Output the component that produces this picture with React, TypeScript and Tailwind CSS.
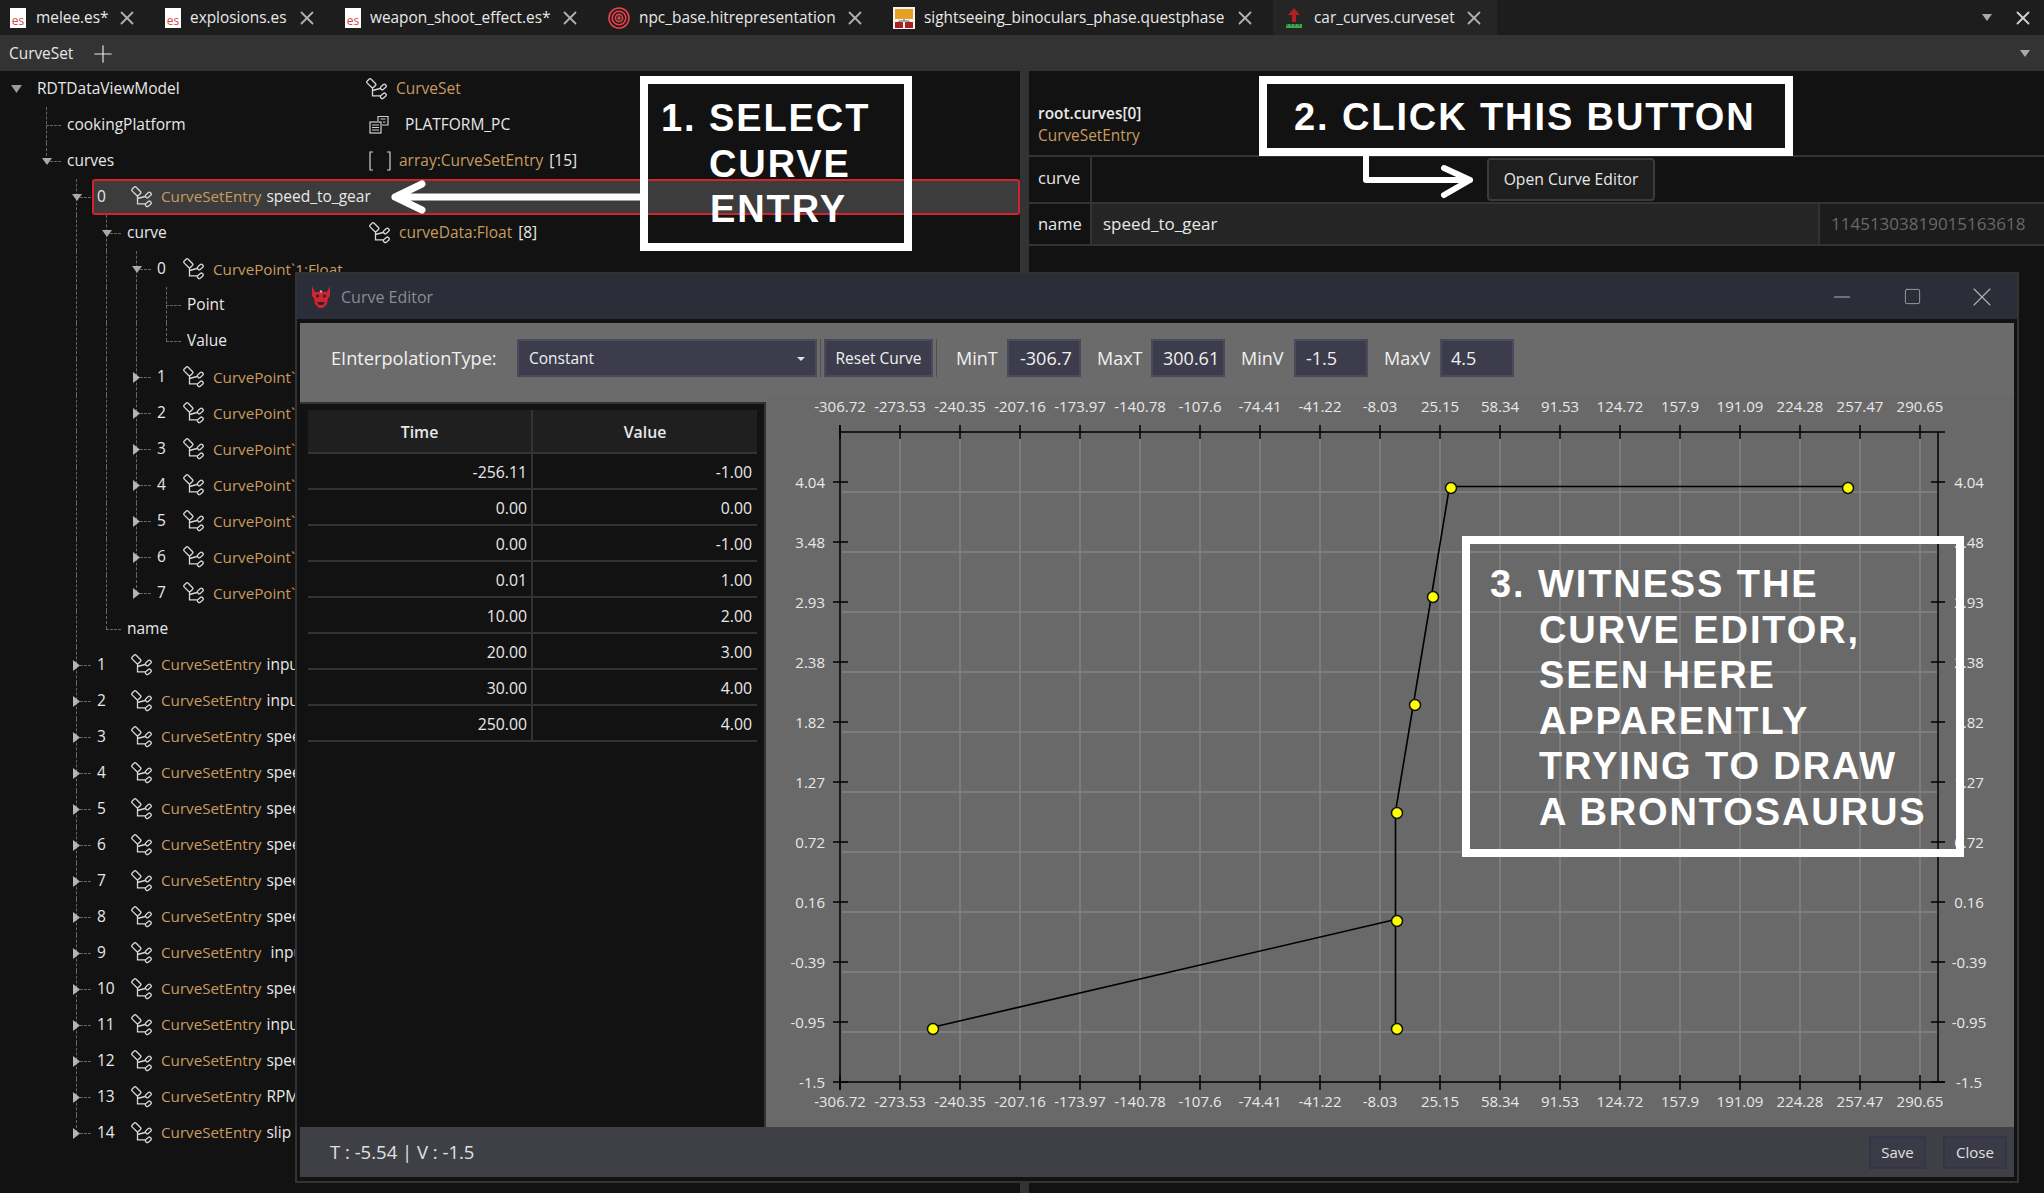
import React from 'react';
import { Minus, Plus, Square, X } from 'lucide-react';

// --- small drawn icons

function TreeIcon() {
    return (
        <svg width="21" height="22" viewBox="0 0 21 22" fill="none" stroke="#d8d8d8" strokeWidth="1.3" className="shrink-0">
            <rect x="0.800" y="2.500" width="9" height="5.500" rx="1.500" transform="rotate(45 5.300 5.300)" />
            <path d="M6.500 9.500V17.800H14M6.500 12.500L14 10.500" />
            <rect x="14.200" y="7.200" width="6.200" height="3.600" rx="1.500" transform="rotate(-40 17.300 9)" />
            <rect x="14.200" y="16" width="6.200" height="3.600" rx="1.500" transform="rotate(-40 17.300 17.800)" />
        </svg>
    );
}

function EnumIcon() {
    return (
        <svg width="20" height="20" viewBox="0 0 20 20" fill="none" stroke="#d0d0d0" strokeWidth="1.2" className="shrink-0">
            <path d="M9 6V1.500H19V10H13" />
            <path d="M11.500 4H16.500M14 7H16.500" />
            <rect x="1" y="7" width="11" height="11" />
            <path d="M3 10H10M3 12.500H10M3 15H10" />
        </svg>
    );
}

function BracketIcon() {
    return (
        <svg width="22" height="20" viewBox="0 0 22 20" fill="none" stroke="#d0d0d0" strokeWidth="1.2" className="shrink-0">
            <path d="M4 1H1V19H4M18 1H21V19H18" />
        </svg>
    );
}

function EsIcon() {
    return (
        <span className="flex h-[20px] w-[16px] items-end justify-center bg-white pb-[1px] text-[12px] leading-[12px] text-[#d8473f]">es</span>
    );
}

function TargetIcon() {
    return (
        <svg width="22" height="22" viewBox="0 0 22 22" fill="none" stroke="#e8414a" strokeWidth="1.6">
            <circle cx="11" cy="11" r="10" />
            <circle cx="11" cy="11" r="6.800" />
            <circle cx="11" cy="11" r="3.600" />
            <circle cx="11" cy="11" r="1" fill="#e8414a" />
        </svg>
    );
}

function PhaseIcon() {
    return (
        <svg width="22" height="22" viewBox="0 0 22 22">
            <rect width="22" height="22" fill="#f4f4f4" />
            <rect x="2" y="2" width="18" height="10" fill="#e8a020" />
            <rect x="2" y="15" width="8" height="6" fill="#a82020" />
            <rect x="12" y="15" width="8" height="6" fill="#a82020" />
            <path d="M11 12V14M6 15V14H16V15" stroke="#666" fill="none" />
        </svg>
    );
}

function CurvesetIcon() {
    return (
        <svg width="22" height="22" viewBox="0 0 22 22">
            <path d="M11 1L17 8H13V15H9V8H5Z" fill="#b02020" />
            <rect x="3" y="17" width="16" height="4" fill="#3aa84a" />
            <path d="M3 17H19" stroke="#1d1d1d" strokeDasharray="2 2" strokeWidth="4" opacity="0.35" />
        </svg>
    );
}

function DemonLogo() {
    return (
        <svg width="20" height="24" viewBox="0 0 20 24" className="shrink-0">
            <path d="M1 1L4 7H16L19 1L19 11L17 13L16 19L12 23H8L4 19L3 13L1 11Z" fill="#cf2431" />
            <circle cx="6.500" cy="11" r="1.600" fill="#33202a" />
            <circle cx="13.500" cy="11" r="1.600" fill="#33202a" />
            <circle cx="10" cy="6.500" r="1.300" fill="#d9a0a0" />
            <path d="M6 17H14L12 20H8Z" fill="#33202a" />
        </svg>
    );
}

function Triangle({ open, root }: { open: boolean; root?: boolean }) {
    if (root) {
        return (
            <svg width="11" height="8" viewBox="0 0 11 8"><path d="M0 0H11L5.500 8Z" fill="#9a9a9a" /></svg>
        );
    }
    return open ? (
        <svg width="10" height="7" viewBox="0 0 10 7"><path d="M0 0H10L5 7Z" fill="#aaaaaa" /></svg>
    ) : (
        <svg width="7" height="11" viewBox="0 0 7 11"><path d="M0 0L7 5.500L0 11Z" fill="#b5b5b5" /></svg>
    );
}

// --- tree data

type TreeNode = {
    name?: string;
    index?: string;
    icon?: boolean;
    type?: string;
    value?: string;
    right?: 'set' | 'enum' | 'array' | 'data';
    rightText?: string;
    rightSuffix?: string;
    selected?: boolean;
    children?: TreeNode[];
};

const closedPoint = (index: string): TreeNode => ({ index, icon: true, type: 'CurvePoint`1:Float', children: [] });
const closedEntry = (index: string, value: string): TreeNode => ({ index, icon: true, type: 'CurveSetEntry', value, children: [] });

const treeData: TreeNode[] = [
    {
        name: 'RDTDataViewModel',
        right: 'set',
        rightText: 'CurveSet',
        children: [
            { name: 'cookingPlatform', right: 'enum', rightSuffix: 'PLATFORM_PC' },
            {
                name: 'curves',
                right: 'array',
                rightText: 'array:CurveSetEntry',
                rightSuffix: '[15]',
                children: [
                    {
                        index: '0',
                        icon: true,
                        type: 'CurveSetEntry',
                        value: 'speed_to_gear',
                        selected: true,
                        children: [
                            {
                                name: 'curve',
                                right: 'data',
                                rightText: 'curveData:Float',
                                rightSuffix: '[8]',
                                children: [
                                    {
                                        index: '0',
                                        icon: true,
                                        type: 'CurvePoint`1:Float',
                                        children: [{ name: 'Point' }, { name: 'Value' }],
                                    },
                                    ...['1', '2', '3', '4', '5', '6', '7'].map(closedPoint),
                                ],
                            },
                            { name: 'name' },
                        ],
                    },
                    closedEntry('1', 'input'),
                    closedEntry('2', 'input'),
                    closedEntry('3', 'speed'),
                    closedEntry('4', 'speed'),
                    closedEntry('5', 'speed'),
                    closedEntry('6', 'speed'),
                    closedEntry('7', 'speed'),
                    closedEntry('8', 'speed'),
                    closedEntry('9', ' input'),
                    closedEntry('10', 'speed'),
                    closedEntry('11', 'input'),
                    closedEntry('12', 'speed'),
                    closedEntry('13', 'RPM'),
                    closedEntry('14', 'slip'),
                ],
            },
        ],
    },
];

type FlatRow = { node: TreeNode; depth: number; guides: number[]; last: boolean };

const guideX = (depth: number) => 16 + 30 * depth;

function flatten(nodes: TreeNode[], depth: number, guides: number[]): FlatRow[] {
    const rows: FlatRow[] = [];
    nodes.forEach((node, i) => {
        const last = i === nodes.length - 1;
        rows.push({ node, depth, guides, last });
        if (node.children && node.children.length > 0) {
            const nextGuides = depth > 0 && !last ? [...guides, guideX(depth)] : guides;
            rows.push(...flatten(node.children, depth + 1, nextGuides));
        }
    });
    return rows;
}

function TreeRow({ row }: { row: FlatRow }) {
    const { node, depth, guides, last } = row;
    const x = guideX(depth);
    const expandable = node.children !== undefined;
    const open = expandable && node.children!.length > 0;

    return (
        <div className="relative flex h-9 items-center whitespace-nowrap text-[15.500px]">
            {node.selected && (
                <div className="absolute inset-y-0 left-[92px] right-0 rounded-[3px] border-2 border-[#d3222f] bg-[#3c3c3c]"></div>
            )}
            {guides.map((g) => (
                <span key={g} className="absolute inset-y-0 border-l border-dashed border-[#666666]" style={{ left: g }}></span>
            ))}
            {depth > 0 && (
                <>
                    <span className={`absolute top-0 border-l border-dashed border-[#666666] ${last ? 'h-[18px]' : 'h-9'}`} style={{ left: x }}></span>
                    <span className="absolute top-[18px] w-[15px] border-t border-dashed border-[#666666]" style={{ left: x }}></span>
                </>
            )}
            {expandable && (
                <span className="absolute top-0 flex h-9 w-0 items-center justify-center" style={{ left: x + 0.5 }}>
                    <span className="flex shrink-0"><Triangle open={open} root={depth === 0} /></span>
                </span>
            )}

            <div className="relative flex w-[369px] shrink-0 items-center" style={{ paddingLeft: 37 + 30 * depth }}>
                {node.index !== undefined && (
                    <>
                        <span className={`shrink-0 text-[#e8e8e8] ${depth === 2 ? 'w-[34px]' : 'w-[26px]'}`}>{node.index}</span>
                        <TreeIcon />
                        <span className="ml-[9px] flex shrink-0 items-baseline">
                            <span className="text-[15.200px] text-[#c89b5f]">{node.type}</span>
                            {node.value && <span className="ml-[5px] whitespace-pre text-[#e8e8e8]">{node.value}</span>}
                        </span>
                    </>
                )}
                {node.name && <span className="text-[#e8e8e8]">{node.name}</span>}
            </div>

            {node.right && (
                <div className={`relative flex items-center ${node.right === 'set' ? '-ml-[3px]' : ''}`}>
                    {(node.right === 'set' || node.right === 'data') && <TreeIcon />}
                    {node.right === 'enum' && <EnumIcon />}
                    {node.right === 'array' && <BracketIcon />}
                    {node.rightText && <span className={`text-[#c89b5f] ${node.right === 'array' ? 'ml-2' : 'ml-[9px]'}`}>{node.rightText}</span>}
                    {node.rightSuffix && <span className={`text-[#e8e8e8] ${node.right === 'enum' ? 'ml-4' : 'ml-[6px]'}`}>{node.rightSuffix}</span>}
                </div>
            )}
        </div>
    );
}

// --- tabs

const tabs = [
    { label: 'melee.es*', icon: <EsIcon />, width: 'w-[155px]', slot: 'w-[26px]' },
    { label: 'explosions.es', icon: <EsIcon />, width: 'w-[180px]', slot: 'w-[25px]' },
    { label: 'weapon_shoot_effect.es*', icon: <EsIcon />, width: 'w-[263px]', slot: 'w-[25px]' },
    { label: 'npc_base.hitrepresentation', icon: <TargetIcon />, width: 'w-[285px]', slot: 'w-[31px]' },
    { label: 'sightseeing_binoculars_phase.questphase', icon: <PhaseIcon />, width: 'w-[390px]', slot: 'w-[31px]' },
    { label: 'car_curves.curveset', icon: <CurvesetIcon />, width: 'w-[224px]', slot: 'w-[31px]', active: true },
];

function TabBar() {
    return (
        <div className="flex h-[35px] shrink-0 items-center bg-[#1d1d1d]">
            {tabs.map((tab) => (
                <div key={tab.label} className={`flex h-full shrink-0 items-center pl-[10px] ${tab.width} ${tab.active ? 'bg-[#252525]' : ''}`}>
                    <span className={`flex shrink-0 ${tab.slot}`}>{tab.icon}</span>
                    <span className="whitespace-nowrap text-[15.400px] text-[#e8e8e8]">{tab.label}</span>
                    <X size={22} strokeWidth={2} className={`ml-auto text-[#b0b0b0] ${tab.active ? 'mr-[12px]' : 'mr-[17px]'}`} />
                </div>
            ))}
            <div className="ml-auto flex items-center gap-[20px] pr-[10px]">
                <Triangle open />
                <X size={22} strokeWidth={2} className="text-[#d0d0d0]" />
            </div>
        </div>
    );
}

// --- curve editor

const tableRows = [
    ['-256.11', '-1.00'],
    ['0.00', '0.00'],
    ['0.00', '-1.00'],
    ['0.01', '1.00'],
    ['10.00', '2.00'],
    ['20.00', '3.00'],
    ['30.00', '4.00'],
    ['250.00', '4.00'],
];

const xLabels = ['-306.72', '-273.53', '-240.35', '-207.16', '-173.97', '-140.78', '-107.6', '-74.41', '-41.22', '-8.03', '25.15', '58.34', '91.53', '124.72', '157.9', '191.09', '224.28', '257.47', '290.65'];
const yLabels = ['4.04', '3.48', '2.93', '2.38', '1.82', '1.27', '0.72', '0.16', '-0.39', '-0.95', '-1.5'];
const curvePoints: [number, number][] = [[933, 1029], [1397, 921], [1397, 1029], [1397, 813], [1415, 705], [1433, 597], [1451, 488], [1848, 488]];

function CurveChart() {
    const left = 840;
    const right = 1938;
    const top = 432;
    const bottom = 1082;
    const polyline = curvePoints.map(([x, y]) => `${x - 1.5},${y - 1.5}`).join(' ');

    return (
        <svg width="1248" height="731" viewBox="766 396 1248 731" className="block">
            {xLabels.slice(1).map((_, i) => (
                <line key={i} x1={left + 60 * (i + 1)} x2={left + 60 * (i + 1)} y1={top} y2={bottom} stroke="#7d7d7d" strokeWidth="2" />
            ))}
            {yLabels.slice(0, 10).map((_, i) => (
                <line key={i} x1={left + 2} x2={right} y1={492 + 60 * i} y2={492 + 60 * i} stroke="#7d7d7d" strokeWidth="2" />
            ))}

            <g stroke="#000000" strokeWidth="1.5">
                <line x1={left} x2={1945} y1={top} y2={top} />
                <line x1={left} x2={1945} y1={bottom} y2={bottom} />
                <line x1={left} x2={left} y1={425} y2={1090} />
                <line x1={right} x2={right} y1={top} y2={bottom} />
                {xLabels.map((_, i) => (
                    <g key={i}>
                        <line x1={left + 60 * i} x2={left + 60 * i} y1={425} y2={439} />
                        <line x1={left + 60 * i} x2={left + 60 * i} y1={1075} y2={1090} />
                    </g>
                ))}
                {yLabels.map((_, i) => (
                    <g key={i}>
                        <line x1={833} x2={848} y1={482 + 60 * i} y2={482 + 60 * i} />
                        <line x1={1931} x2={1945} y1={482 + 60 * i} y2={482 + 60 * i} />
                    </g>
                ))}
            </g>

            <g className="fill-[#e8e8e8] text-[15px]">
                {xLabels.map((label, i) => (
                    <g key={label}>
                        <text x={left + 60 * i} y={412} textAnchor="middle">{label}</text>
                        <text x={left + 60 * i} y={1107} textAnchor="middle">{label}</text>
                    </g>
                ))}
                {yLabels.map((label, i) => (
                    <g key={label}>
                        <text x={825} y={488 + 60 * i} textAnchor="end">{label}</text>
                        <text x={1969} y={488 + 60 * i} textAnchor="middle">{label}</text>
                    </g>
                ))}
            </g>

            <polyline points={polyline} fill="none" stroke="#000000" strokeWidth="1.6" />
            {curvePoints.map(([x, y], i) => (
                <circle key={i} cx={x} cy={y} r="5.500" fill="#ffff00" stroke="#111111" strokeWidth="1.500" />
            ))}
        </svg>
    );
}

const fields = [
    { label: 'MinT', value: '-306.7', width: 'w-[51px]', pad: 'pl-[11px]' },
    { label: 'MaxT', value: '300.61', width: 'w-[54px]', pad: 'pl-[10px]' },
    { label: 'MinV', value: '-1.5', width: 'w-[53px]', pad: 'pl-[10px]' },
    { label: 'MaxV', value: '4.5', width: 'w-[56px]', pad: 'pl-[9px]' },
];

function CurveEditor() {
    return (
        <div className="absolute left-[295px] top-[272px] flex h-[911px] w-[1724px] flex-col border-2 border-[#333333] bg-[#121212]">
            <div className="flex h-[45px] shrink-0 items-center bg-[#2b2d38] pl-[14px]">
                <DemonLogo />
                <span className="ml-[10px] text-[16px] text-[#8b8b90]">Curve Editor</span>
                <div className="ml-auto flex items-center">
                    <span className="flex w-[70px] justify-center"><Minus size={26} strokeWidth={1} className="text-[#b5b5b5]" /></span>
                    <span className="flex w-[70px] justify-center"><Square size={19} strokeWidth={1} className="text-[#b5b5b5]" /></span>
                    <span className="flex w-[70px] justify-center"><X size={32} strokeWidth={0.8} className="text-[#b5b5b5]" /></span>
                </div>
            </div>

            <div className="mx-[3px] mb-[4px] mt-1 flex min-h-0 flex-1 flex-col bg-[#6b6b6b]">
                <div className="flex h-[73px] shrink-0 items-start pl-[31px] pt-[16px] text-[#f0f0f0]">
                    <span className="flex h-[38px] w-[186px] items-center pt-px text-[18.200px]">EInterpolationType:</span>
                    <div className="flex h-[38px] w-[300px] items-center justify-between border-2 border-[#4a4a5c] bg-[#3c3c4c] pl-[10px] pr-[10px] pt-px text-[15.500px]">
                        <span>Constant</span>
                        <svg width="8" height="4" viewBox="0 0 8 4"><path d="M0 0H8L4 4Z" fill="#e0e0e0" /></svg>
                    </div>
                    <span className="ml-[3px] h-[38px] w-px bg-[#505050]"></span>
                    <div className="ml-[3px] flex h-[38px] w-[109px] items-center justify-center border-2 border-[#4a4a5c] bg-[#3c3c4c] pt-px text-[15.500px]">Reset Curve</div>
                    <span className="ml-[3px] h-[38px] w-px bg-[#505050]"></span>
                    {fields.map((field, i) => (
                        <div key={field.label} className={`flex h-[38px] items-center ${i === 0 ? 'ml-[19px]' : 'ml-4'}`}>
                            <span className={`text-[18px] ${field.width}`}>{field.label}</span>
                            <span className={`flex h-[38px] w-[74px] items-center border-2 border-[#4a4a5c] bg-[#3c3c4c] text-[18px] ${field.pad}`}>{field.value}</span>
                        </div>
                    ))}
                </div>

                <div className="flex min-h-0 flex-1">
                    <div className="mt-[6px] w-[466px] shrink-0 border-r-2 border-t-2 border-[#333333] bg-[#121212] pl-[8px] pt-[6px] text-[15.800px] text-[#e8e8e8]">
                        <div className="w-[449px]">
                            <div className="grid h-[44px] grid-cols-[225px_224px] border-b-2 border-[#333333] bg-[#1f1f1f] font-semibold">
                                <div className="flex items-center justify-center border-r-2 border-[#333333] pt-[4px]">Time</div>
                                <div className="flex items-center justify-center pt-[4px]">Value</div>
                            </div>
                            {tableRows.map((row, i) => (
                                <div key={i} className="grid h-9 grid-cols-[225px_224px] border-b-2 border-[#333333]">
                                    <div className="flex items-center justify-end border-r-2 border-[#333333] pr-[4px] pt-[4px]">{row[0]}</div>
                                    <div className="flex items-center justify-end pr-[5px] pt-[4px]">{row[1]}</div>
                                </div>
                            ))}
                        </div>
                    </div>
                    <div className="min-w-0 flex-1 bg-[#696969]">
                        <CurveChart />
                    </div>
                </div>

                <div className="flex h-[50px] shrink-0 items-center bg-[#3f4046] pl-[30px] pr-[7px] text-[#e0e0e0]">
                    <span className="text-[18.500px]">T : -5.54 | V : -1.5</span>
                    <div className="ml-auto flex gap-[17px] text-[15px]">
                        <div className="flex h-[33px] w-[57px] items-center justify-center border-2 border-[#35354a] bg-[#3b3b47]">Save</div>
                        <div className="flex h-[33px] w-[64px] items-center justify-center border-2 border-[#35354a] bg-[#3b3b47]">Close</div>
                    </div>
                </div>
            </div>
        </div>
    );
}

// --- right hand details panel

function DetailsPanel() {
    return (
        <div className="flex min-w-0 flex-1 flex-col text-[#e8e8e8]">
            <div className="flex h-[86px] shrink-0 flex-col justify-end border-b-2 border-[#333333] pb-[8px] pl-[9px] text-[15.400px]">
                <span className="font-semibold leading-[22px]">root.curves[0]</span>
                <span className="leading-[22px] text-[#c89b5f]">CurveSetEntry</span>
            </div>
            <div className="flex h-[47px] shrink-0 border-b-2 border-[#333333]">
                <div className="flex w-[63px] items-center border-r-2 border-[#333333] pb-[2px] pl-[9px] text-[16.500px]">curve</div>
                <div className="flex flex-1 items-center pl-[395px]">
                    <div className="flex h-[43px] w-[168px] items-center justify-center rounded-[4px] border-2 border-[#3a3a42] bg-[#1e1e1e] text-[15.700px]">Open Curve Editor</div>
                </div>
            </div>
            <div className="flex h-[42px] shrink-0 border-b-2 border-[#333333] text-[17px]">
                <div className="flex w-[63px] items-center border-r-2 border-[#333333] pl-[9px] text-[16.500px]">name</div>
                <div className="flex flex-1 items-center bg-[#252525] pl-[11px]">speed_to_gear</div>
                <div className="flex w-[226px] items-center border-l-2 border-[#333333] bg-[#1c1c1c] pl-[11px] text-[#686868]">11451303819015163618</div>
            </div>
        </div>
    );
}

// --- annotations drawn over the screenshot

const noteText = "font-['Liberation_Sans',sans-serif] text-[38px] font-bold leading-[45.600px] tracking-[1.900px] text-white whitespace-nowrap";

function Annotations() {
    return (
        <>
            <div className={`absolute left-[640px] top-[76px] h-[175px] w-[272px] border-8 border-white pl-[13px] pt-[12px] ${noteText}`}>
                <p>1. SELECT</p>
                <p className="pl-[48px]">CURVE</p>
                <p className="pl-[49px]">ENTRY</p>
            </div>
            <div className={`absolute left-[1259px] top-[76px] flex h-[80px] w-[534px] items-center border-8 border-white pl-[27px] pt-[3px] ${noteText}`}>
                2. CLICK THIS BUTTON
            </div>
            <div className={`absolute left-[1462px] top-[536px] h-[321px] w-[502px] border-8 border-white pl-5 pt-[18px] ${noteText}`}>
                <p>3. WITNESS THE</p>
                <p className="pl-[49px]">CURVE EDITOR,</p>
                <p className="pl-[49px]">SEEN HERE</p>
                <p className="pl-[49px]">APPARENTLY</p>
                <p className="pl-[49px]">TRYING TO DRAW</p>
                <p className="pl-[49px]">A BRONTOSAURUS</p>
            </div>
            <svg width="256" height="42" viewBox="0 0 256 42" className="absolute left-[388px] top-[176px]" fill="none" stroke="#ffffff" strokeWidth="7" strokeLinecap="round" strokeLinejoin="round">
                <path d="M252 21H7M34 8L7 21L34 34" />
            </svg>
            <svg width="120" height="48" viewBox="0 0 120 48" className="absolute left-[1358px] top-[155px]" fill="none" stroke="#ffffff" strokeWidth="6" strokeLinecap="round" strokeLinejoin="round">
                <path d="M8 0V25H112M86 13L112 25L86 40" />
            </svg>
        </>
    );
}

export default function App() {
    const rows = flatten(treeData, 0, []);

    return (
        <div className="relative flex h-screen w-full flex-col overflow-hidden bg-[#121212] font-['Open_Sans',sans-serif] text-[#e8e8e8]">
            <TabBar />
            <div className="flex h-[36px] shrink-0 items-center bg-[#333333] pl-[9px] pr-[14px] pt-px text-[15.400px]">
                <span className="w-[80px]">CurveSet</span>
                <Plus size={28} strokeWidth={1} />
                <span className="ml-auto flex"><Triangle open /></span>
            </div>
            <div className="flex min-h-0 flex-1">
                <div className="w-[1020px] shrink-0 overflow-hidden">
                    {rows.map((row, i) => <TreeRow key={i} row={row} />)}
                </div>
                <div className="w-[9px] shrink-0 bg-[#333333]"></div>
                <DetailsPanel />
            </div>
            <CurveEditor />
            <Annotations />
        </div>
    );
}
